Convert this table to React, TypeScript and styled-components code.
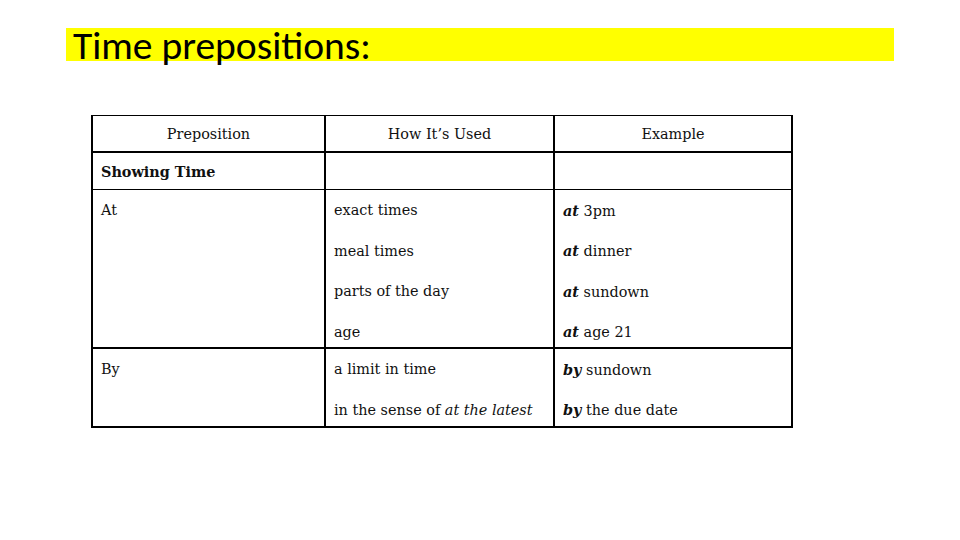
import React from 'react';
import styled, { createGlobalStyle } from 'styled-components';

const GlobalStyle = createGlobalStyle`
  html, body {
    margin: 0;
    padding: 0;
    background: #ffffff;
  }
`;

const Slide = styled.div`
  width: 960px;
  height: 540px;
  background: #ffffff;
  padding: 28px 0 0 66px;
  box-sizing: border-box;
  display: flex;
  flex-direction: column;
`;

const TitleBar = styled.div`
  width: 828px;
  height: 33px;
  background: #ffff00;
  display: flex;
  align-items: flex-end;
`;

const Title = styled.h1`
  margin: 0 0 -6px 7px;
  font-family: Carlito, 'Liberation Sans Narrow', 'DejaVu Sans Condensed', 'Liberation Sans', sans-serif;
  font-weight: normal;
  font-size: 39.5px;
  line-height: 42px;
  color: #000000;
  white-space: nowrap;
`;

const Table = styled.div`
  margin: 54px 0 0 25px;
  width: 702px;
  border: 2px solid #000;
  border-top-width: 1px;
  box-sizing: border-box;
  font-family: 'DejaVu Serif', Georgia, serif;
  font-size: 14.4px;
  color: #111;
`;

const Row = styled.div<{ $h: number; $line?: number }>`
  display: grid;
  grid-template-columns: 233px 229px 1fr;
  height: ${(p) => p.$h}px;
  border-bottom: ${(p) => p.$line ?? 2}px solid #000;
  &:last-child {
    border-bottom: none;
  }
`;

const Cell = styled.div<{ $center?: boolean }>`
  border-right: 2px solid #000;
  padding-left: ${(p) => (p.$center ? 0 : 8)}px;
  overflow: hidden;
  display: flex;
  flex-direction: column;
  align-items: ${(p) => (p.$center ? 'center' : 'flex-start')};
  justify-content: ${(p) => (p.$center ? 'center' : 'flex-start')};
  &:last-child {
    border-right: none;
  }
`;

const Line = styled.div`
  flex: 0 0 40.5px;
  display: flex;
  align-items: center;
  white-space: pre;
`;

const HeadLine = styled(Line)`
  flex-basis: 36px;
  font-weight: bold;
`;

const Em = styled.em`
  font-weight: bold;
`;

const rows = [
  {
    prep: 'At',
    height: 157,
    items: [
      ['exact times', 'at', '3pm'],
      ['meal times', 'at', 'dinner'],
      ['parts of the day', 'at', 'sundown'],
      ['age', 'at', 'age 21'],
    ],
  },
  {
    prep: 'By',
    height: 77,
    items: [
      ['a limit in time', 'by', 'sundown'],
      ['in the sense of |at the latest', 'by', 'the due date'],
    ],
  },
];

const renderUse = (text: string) => {
  const [plain, italic] = text.split('|');
  return (
    <span>
      {plain}
      {italic && <i>{italic}</i>}
    </span>
  );
};

export default function App() {
  return (
    <>
      <GlobalStyle />
      <Slide>
        <TitleBar>
          <Title>Time prepositions:</Title>
        </TitleBar>
        <Table>
          <Row $h={35}>
            <Cell $center>Preposition</Cell>
            <Cell $center>How It’s Used</Cell>
            <Cell $center>Example</Cell>
          </Row>
          <Row $h={36} $line={1}>
            <Cell>
              <HeadLine>Showing Time</HeadLine>
            </Cell>
            <Cell />
            <Cell />
          </Row>
          {rows.map((r) => (
            <Row key={r.prep} $h={r.height}>
              <Cell>
                <Line>{r.prep}</Line>
              </Cell>
              <Cell>
                {r.items.map((it) => (
                  <Line key={it[0]}>{renderUse(it[0])}</Line>
                ))}
              </Cell>
              <Cell>
                {r.items.map((it) => (
                  <Line key={it[0]}>
                    <span>
                      <Em>{it[1]}</Em> {it[2]}
                    </span>
                  </Line>
                ))}
              </Cell>
            </Row>
          ))}
        </Table>
      </Slide>
    </>
  );
}
